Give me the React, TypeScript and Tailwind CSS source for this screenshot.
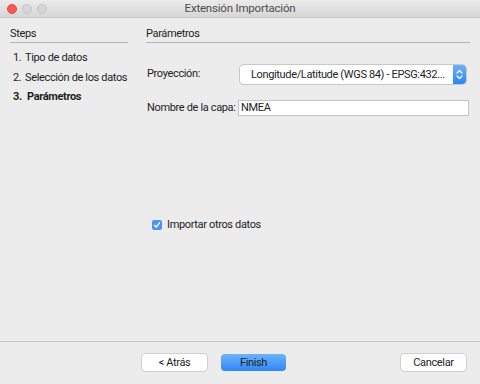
export default function App() {
  return (
    <div
      className="w-[480px] h-[384px] bg-[#ececec] flex flex-col text-[#1e1e1e] text-[11px] tracking-[-0.35px] whitespace-nowrap overflow-hidden"
      style={{ fontFamily: 'Roboto, "Liberation Sans", Arial, sans-serif' }}
    >
      {/* title bar */}
      <div className="relative h-[18px] flex items-center justify-center bg-gradient-to-b from-[#ebebeb] to-[#d6d6d6] border-b border-[#c4c4c4]">
        <div className="absolute left-[7px] top-[4px] flex gap-[5px]">
          <span className="w-[10px] h-[10px] rounded-full bg-[#fc5753] border border-[#df4744]" />
          <span className="w-[10px] h-[10px] rounded-full bg-[#d5d5d5] border border-[#c4c4c4]" />
          <span className="w-[10px] h-[10px] rounded-full bg-[#d5d5d5] border border-[#c4c4c4]" />
        </div>
        <span className="text-[11.5px] tracking-[-0.2px] text-[#4d4d4d]">Extensión Importación</span>
      </div>

      <div className="flex flex-1">
        {/* steps */}
        <div className="w-[128px] pl-[10px] pt-[8px]">
          <div className="leading-[16px] border-b border-[#b4b4b4]">Steps</div>
          <div className="mt-[5px] flex flex-col leading-[19.5px]">
            <div className="flex">
              <span className="w-[12px] pl-[3px]">1.</span>
              <span className="pl-[3px]">Tipo de datos</span>
            </div>
            <div className="flex">
              <span className="w-[12px] pl-[3px]">2.</span>
              <span className="pl-[3px]">Selección de los datos</span>
            </div>
            <div className="flex font-bold">
              <span className="w-[12px] pl-[3px]">3.</span>
              <span className="pl-[5px]">Parámetros</span>
            </div>
          </div>
        </div>

        {/* parameters */}
        <div className="ml-[18px] w-[324px] pt-[8px] flex flex-col">
          <div className="leading-[16px] border-b border-[#b4b4b4]">Parámetros</div>

          <div className="mt-[22px] flex items-center">
            <span className="w-[94px] pl-[1px]">Proyección:</span>
            <div className="w-[226px] h-[19px] flex items-stretch bg-white rounded-[4px] shadow-[0_0_0_1px_#c8c8c8,0_1px_1px_rgba(0,0,0,0.15)]">
              <span className="flex-1 pl-[11px] leading-[19px] overflow-hidden">Longitude/Latitude (WGS 84) - EPSG:432...</span>
              <span className="w-[13px] flex items-center justify-center rounded-r-[4px] bg-gradient-to-b from-[#6cb1fb] to-[#2d84f4]">
                <svg width="7" height="11" viewBox="0 0 7 11" fill="none" stroke="white" strokeWidth="1.2" strokeLinecap="round" strokeLinejoin="round">
                  <path d="M1 4 L3.5 1.5 L6 4" />
                  <path d="M1 7 L3.5 9.5 L6 7" />
                </svg>
              </span>
            </div>
          </div>

          <div className="mt-[16px] flex items-center">
            <span className="w-[92px] pl-[1px]">Nombre de la capa:</span>
            <div className="w-[231px] h-[16px] bg-white border border-[#c4c4c4] pl-[2px] leading-[14px]">NMEA</div>
          </div>

          <div className="mt-[100px] flex items-center pl-[6px]">
            <span className="w-[10px] h-[10px] rounded-[2px] bg-[#4d93f5] flex items-center justify-center">
              <svg width="8" height="8" viewBox="0 0 8 8" fill="none" stroke="white" strokeWidth="1.3" strokeLinecap="round" strokeLinejoin="round">
                <path d="M1.5 4.2 L3.3 6 L6.5 1.8" />
              </svg>
            </span>
            <span className="ml-[5px]">Importar otros datos</span>
          </div>
        </div>
      </div>

      {/* footer */}
      <div className="h-[43px] border-t border-[#c8c8c8] flex items-start pt-[12px]">
        <button className="ml-[142px] w-[65px] h-[17px] bg-white rounded-[4px] shadow-[0_0_0_1px_#cfcfcf,0_1px_1px_rgba(0,0,0,0.1)] leading-[17px]">
          &lt; Atrás
        </button>
        <button className="ml-[14px] w-[65px] h-[17px] rounded-[4px] bg-gradient-to-b from-[#6db3fb] to-[#2e86f5] leading-[17px]">
          Finish
        </button>
        <button className="ml-[115px] w-[65px] h-[17px] bg-white rounded-[4px] shadow-[0_0_0_1px_#cfcfcf,0_1px_1px_rgba(0,0,0,0.1)] leading-[17px]">
          Cancelar
        </button>
      </div>
    </div>
  );
}
